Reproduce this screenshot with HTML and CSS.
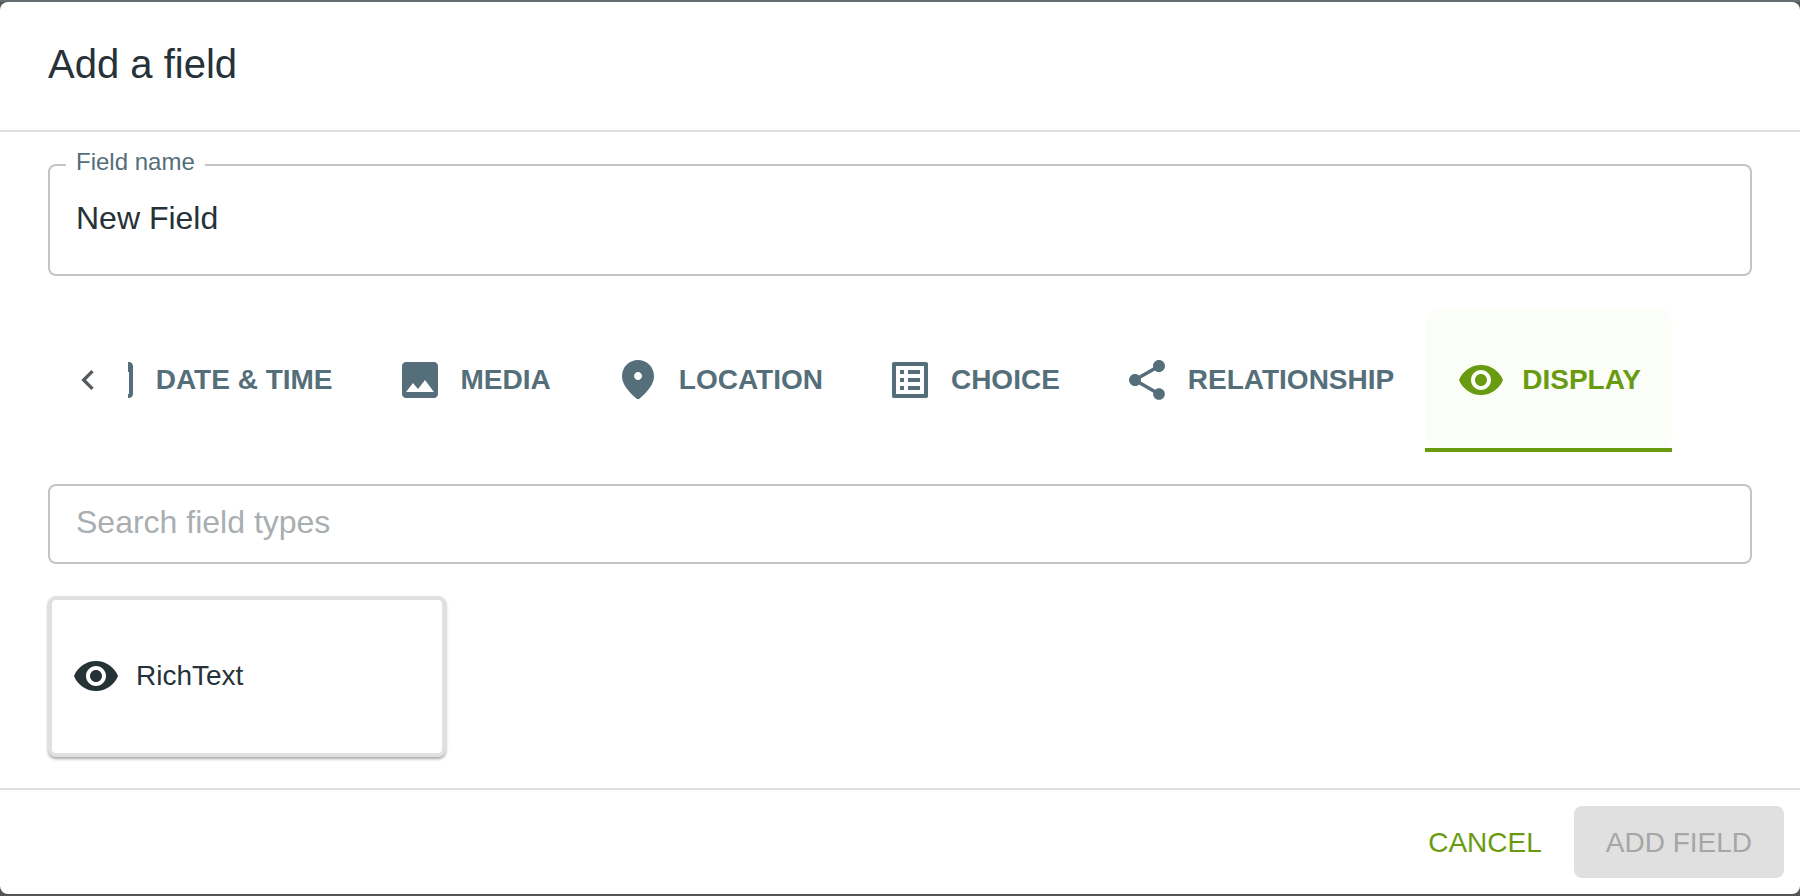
FILE: index.html
```html
<!DOCTYPE html>
<html lang="en">
<head>
<meta charset="utf-8">
<title>Add a field</title>
<link rel="stylesheet" href="styles.css">
</head>
<body>
<div class="dialog">
  <header class="dialog-header"><h2 class="dialog-title">Add a field</h2></header>
  <main class="dialog-content">
    <div class="outlined name-field">
      <span class="field-label">Field name</span>
      <span class="field-value">New Field</span>
    </div>
    <div class="tabs">
      <div class="scroll-button">
        <svg class="chevron" viewBox="0 0 24 24"><path d="M15.41 7.41L14 6l-6 6 6 6 1.41-1.41L10.83 12z"/></svg>
      </div>
      <div class="tab-scroller">
        <div class="tab">
          <svg class="icon" viewBox="0 0 24 24"><path d="M17 12h-5v5h5v-5zM16 1v2H8V1H6v2H5c-1.11 0-1.99.9-1.99 2L3 19c0 1.1.89 2 2 2h14c1.1 0 2-.9 2-2V5c0-1.1-.9-2-2-2h-1V1h-2zm3 18H5V8h14v11z"/></svg>
          <span>DATE &amp; TIME</span>
        </div>
        <div class="tab">
          <svg class="icon" viewBox="0 0 24 24"><path d="M21 19V5c0-1.1-.9-2-2-2H5c-1.1 0-2 .9-2 2v14c0 1.1.9 2 2 2h14c1.1 0 2-.9 2-2zM8.5 13.5l2.5 3.01L14.5 12l4.5 6H5l3.5-4.5z"/></svg>
          <span>MEDIA</span>
        </div>
        <div class="tab">
          <svg class="icon" viewBox="0 0 24 24"><path d="M12 2c-4.2 0-8 3.22-8 8.2 0 3.18 2.45 6.92 7.34 11.23.38.33.95.33 1.33 0C17.55 17.12 20 13.38 20 10.2 20 5.22 16.2 2 12 2zm0 10c-1.1 0-2-.9-2-2s.9-2 2-2 2 .9 2 2-.9 2-2 2z"/></svg>
          <span>LOCATION</span>
        </div>
        <div class="tab">
          <svg class="icon" viewBox="0 0 24 24"><path d="M19 5v14H5V5h14m1.1-2H3.9c-.5 0-.9.4-.9.9v16.2c0 .4.4.9.9.9h16.2c.4 0 .9-.5.9-.9V3.9c0-.5-.5-.9-.9-.9zM11 7h6v2h-6V7zm0 4h6v2h-6v-2zm0 4h6v2h-6zM7 7h2v2H7zm0 4h2v2H7zm0 4h2v2H7z"/></svg>
          <span>CHOICE</span>
        </div>
        <div class="tab">
          <svg class="icon" viewBox="0 0 24 24"><path d="M18 16.08c-.76 0-1.44.3-1.96.77L8.91 12.7c.05-.23.09-.46.09-.7s-.04-.47-.09-.7l7.05-4.11c.54.5 1.25.81 2.04.81 1.66 0 3-1.34 3-3s-1.34-3-3-3-3 1.34-3 3c0 .24.04.47.09.7L8.04 9.81C7.5 9.31 6.79 9 6 9c-1.66 0-3 1.34-3 3s1.34 3 3 3c.79 0 1.5-.31 2.04-.81l7.12 4.16c-.05.21-.08.43-.08.65 0 1.61 1.31 2.92 2.92 2.92 1.61 0 2.92-1.31 2.92-2.92s-1.31-2.92-2.92-2.92z"/></svg>
          <span>RELATIONSHIP</span>
        </div>
        <div class="tab tab-active">
          <svg class="icon" viewBox="0 0 24 24"><path d="M12 4.5C7 4.5 2.73 7.61 1 12c1.73 4.39 6 7.5 11 7.5s9.27-3.11 11-7.5c-1.73-4.39-6-7.5-11-7.5zM12 17c-2.76 0-5-2.24-5-5s2.24-5 5-5 5 2.24 5 5-2.24 5-5 5zm0-8c-1.66 0-3 1.34-3 3s1.34 3 3 3 3-1.34 3-3-1.34-3-3-3z"/></svg>
          <span>DISPLAY</span>
        </div>
      </div>
      <div class="scroll-button"></div>
    </div>
    <div class="outlined search-field"><span class="placeholder">Search field types</span></div>
    <div class="card-grid">
      <div class="type-card">
        <svg class="icon" viewBox="0 0 24 24"><path d="M12 4.5C7 4.5 2.73 7.61 1 12c1.73 4.39 6 7.5 11 7.5s9.27-3.11 11-7.5c-1.73-4.39-6-7.5-11-7.5zM12 17c-2.76 0-5-2.24-5-5s2.24-5 5-5 5 2.24 5 5-2.24 5-5 5zm0-8c-1.66 0-3 1.34-3 3s1.34 3 3 3 3-1.34 3-3-1.34-3-3-3z"/></svg>
        <span>RichText</span>
      </div>
    </div>
  </main>
  <footer class="dialog-actions">
    <button class="btn btn-text" type="button">CANCEL</button>
    <button class="btn btn-disabled" type="button">ADD FIELD</button>
  </footer>
</div>
</body>
</html>
```
FILE: styles.css
```css
* { box-sizing: border-box; }
html, body { height: 100%; }
body {
  margin: 0;
  padding: 2px 0;
  background: linear-gradient(#666e71 0 2px, #555 2px);
  font-family: "Liberation Sans", Arial, sans-serif;
  color: #263238;
  overflow: hidden;
}
.dialog {
  height: 892px;
  background: #fff;
  border-radius: 8px;
  display: flex;
  flex-direction: column;
}
.dialog-header {
  height: 130px;
  flex: none;
  padding: 0 48px 4px;
  display: flex;
  align-items: center;
  border-bottom: 2px solid #e0e0e0;
}
.dialog-title {
  margin: 0;
  font-size: 40px;
  font-weight: 400;
  line-height: 1.2;
}
.dialog-content {
  flex: 1;
  min-height: 0;
  padding: 32px 48px 0;
  display: flex;
  flex-direction: column;
}
.outlined {
  position: relative;
  display: flex;
  align-items: center;
  border: 2px solid #c4c4c4;
  border-radius: 8px;
  padding: 0 26px 4px;
}
.name-field { height: 112px; font-size: 32px; }
.field-label {
  position: absolute;
  left: 16px;
  top: -18px;
  padding: 0 10px;
  background: #fff;
  color: #546e7a;
  font-size: 24px;
  line-height: 28px;
}
.tabs {
  display: flex;
  height: 144px;
  margin-top: 32px;
  flex: none;
}
.scroll-button {
  width: 80px;
  flex: none;
  display: flex;
  align-items: center;
  justify-content: center;
}
.chevron { width: 40px; height: 40px; fill: #52595d; }
.tab-scroller {
  flex: 1;
  min-width: 0;
  overflow: hidden;
  display: flex;
  justify-content: flex-end;
}
.tab {
  position: relative;
  flex: none;
  display: flex;
  align-items: center;
  gap: 17px;
  padding: 0 31px 0 32px;
  font-size: 28px;
  font-weight: 700;
  color: #546e7a;
}
.icon { width: 48px; height: 48px; flex: none; fill: currentColor; }
.tab-active {
  color: #699b10;
  background: #fbfdf9;
  border-radius: 12px / 24px;
}
.tab-active::after {
  content: "";
  position: absolute;
  left: 0;
  right: 0;
  bottom: 0;
  height: 4px;
  background: #699b10;
}
.search-field { height: 80px; margin-top: 32px; flex: none; font-size: 32px; }
.placeholder { color: #a9aeb1; }
.card-grid { margin-top: 32px; display: flex; }
.type-card {
  width: 398px;
  height: 161px;
  display: flex;
  align-items: center;
  gap: 16px;
  padding: 0 20px 1px;
  border: 4px solid #e0e0e0;
  border-radius: 8px;
  background: #fff;
  font-size: 28px;
  box-shadow: 0 2px 3px rgba(0,0,0,.35);
}
.dialog-actions {
  height: 106px;
  flex: none;
  border-top: 2px solid #e0e0e0;
  padding: 0 16px 16px;
  display: flex;
  align-items: flex-end;
  justify-content: flex-end;
  gap: 16px;
}
.btn {
  height: 72px;
  border: 0;
  border-radius: 8px;
  font-family: inherit;
  font-size: 28px;
  padding: 2px 32px 0;
  background: none;
}
.btn-text { color: #699b10; padding: 2px 16px 0; }
.btn-disabled { background: #e0e0e0; color: #a6a6a6; }
```
